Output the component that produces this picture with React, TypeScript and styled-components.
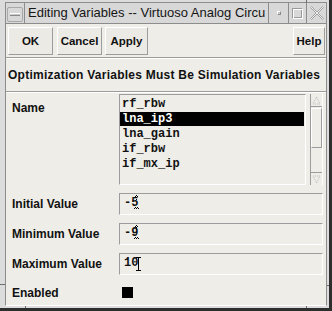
import React from 'react';
import styled, { createGlobalStyle } from 'styled-components';

const Global = createGlobalStyle`
  html, body { margin: 0; padding: 0; background: #dcdcdc; }
  body { font-family: "Liberation Sans", Arial, sans-serif; }
`;

const Frame = styled.div`
  position: relative;
  box-sizing: border-box;
  width: 332px;
  height: 311px;
  background: #dcdcdc;
  padding: 2px 2px 2px 5px;
  border-right: 3px solid #2e2e2e;
  border-bottom: 3px solid #2e2e2e;
  display: flex;
`;

const Notch = styled.div<{ $x?: number; $y?: number; $w: number; $h: number }>`
  position: absolute;
  background: #6e6e6e;
  width: ${(p) => p.$w}px;
  height: ${(p) => p.$h}px;
  ${(p) => (p.$x !== undefined ? `left: ${p.$x}px;` : '')}
  ${(p) => (p.$y !== undefined ? `top: ${p.$y}px;` : '')}
`;

const Window = styled.div`
  box-sizing: border-box;
  width: 322px;
  height: 304px;
  border: 1px solid #8c8c8c;
  border-bottom-color: #ffffff;
  display: flex;
  flex-direction: column;
`;

const TitleBar = styled.div`
  display: flex;
  height: 21px;
  box-sizing: border-box;
  background: #d8d8d8;
  border-bottom: 1px solid #8c8c8c;
`;

const TitleCell = styled.div<{ $w?: number }>`
  box-sizing: border-box;
  ${(p) => (p.$w ? `width: ${p.$w}px; flex: none;` : 'flex: 1; min-width: 0;')}
  border-right: 1px solid #8c8c8c;
  display: flex;
  align-items: center;
  justify-content: center;
  &:last-child { border-right: none; }
`;

const TitleText = styled.div`
  flex: 1;
  padding-left: 3px;
  font-size: 13px;
  line-height: 20px;
  color: #151515;
  white-space: nowrap;
  overflow: hidden;
`;

const MenuBox = styled.div`
  box-sizing: border-box;
  width: 16px;
  height: 15px;
  margin-top: 3px;
  border: 1px solid #a8a8a8;
  border-radius: 2px;
  display: flex;
  align-items: center;
  justify-content: center;
`;

const MenuDash = styled.div`
  width: 10px;
  height: 1px;
  border-top: 1px solid #ffffff;
  border-bottom: 1px solid #8a8a8a;
  background: #c8c8c8;
`;

const MinIcon = styled.div`
  width: 2px;
  height: 2px;
  border: 1px solid #8a8a8a;
  border-top-color: #ffffff;
  border-left-color: #ffffff;
  background: #c8c8c8;
`;

const MaxIcon = styled.div`
  box-sizing: border-box;
  width: 11px;
  height: 11px;
  border: 1px solid #9a9a9a;
  border-bottom-color: #ffffff;
  border-right-color: #ffffff;
  box-shadow: inset 1px 1px 0 #ffffff, inset -1px -1px 0 #9a9a9a;
`;

const Body = styled.div`
  flex: 1;
  background: #eeede8;
  display: flex;
  flex-direction: column;
`;

const ButtonRow = styled.div`
  display: flex;
  align-items: flex-start;
  height: 33px;
  box-sizing: border-box;
  padding: 3px 1px 0 2px;
`;

const Spacer = styled.div`
  flex: 1;
`;

const Button = styled.div<{ $w: number; $gap?: number }>`
  box-sizing: border-box;
  width: ${(p) => p.$w}px;
  height: 28px;
  margin-right: ${(p) => p.$gap ?? 0}px;
  border: 1px solid #9c9c9c;
  border-top-color: #ffffff;
  border-left-color: #ffffff;
  background: #eceae4;
  display: flex;
  align-items: center;
  justify-content: center;
  font-weight: bold;
  font-size: 11.5px;
  color: #111;
`;

const Separator = styled.div`
  height: 1px;
  background: #9c9c9c;
  border-bottom: 1px solid #ffffff;
`;

const Heading = styled.div`
  height: 32px;
  line-height: 32px;
  padding-left: 2px;
  font-weight: bold;
  font-size: 12px;
  letter-spacing: 0.25px;
  color: #111;
  white-space: nowrap;
`;

const Form = styled.div`
  display: grid;
  grid-template-columns: 107px 204px;
  row-gap: 8px;
  padding: 1px 3px 0 6px;
`;

const Label = styled.div<{ $top?: boolean }>`
  font-weight: bold;
  font-size: 12px;
  line-height: 14px;
  color: #111;
  align-self: ${(p) => (p.$top ? 'start' : 'center')};
  padding-top: ${(p) => (p.$top ? 7 : 0)}px;
`;

const ListArea = styled.div`
  display: flex;
  gap: 4px;
  height: 91px;
`;

const ListBox = styled.div`
  box-sizing: border-box;
  width: 187px;
  border: 1px solid #9c9c9c;
  border-bottom-color: #ffffff;
  border-right-color: #ffffff;
  padding: 2px 1px 0 0;
  display: flex;
  flex-direction: column;
  gap: 1px;
`;

const ListItem = styled.div<{ $sel?: boolean }>`
  height: 14px;
  line-height: 14px;
  padding-left: 2px;
  font-family: "Liberation Mono", "Courier New", monospace;
  font-weight: bold;
  font-size: 12px;
  background: ${(p) => (p.$sel ? '#000' : 'transparent')};
  color: ${(p) => (p.$sel ? '#fff' : '#111')};
`;

const Scrollbar = styled.div`
  box-sizing: border-box;
  width: 13px;
  border-left: 1px solid #9c9c9c;
  border-right: 1px solid #ffffff;
  display: flex;
  flex-direction: column;
`;

const ArrowCell = styled.div<{ $bottom?: boolean }>`
  height: 12px;
  flex: none;
  display: flex;
  align-items: center;
  justify-content: center;
  ${(p) => (p.$bottom ? 'border-top: 1px solid #9c9c9c; margin-top: auto;' : 'border-bottom: 1px solid #9c9c9c;')}
`;

const Thumb = styled.div`
  box-sizing: border-box;
  height: 40px;
  margin: 1px 0 0 0;
  border: 1px solid #9c9c9c;
  border-top-color: #ffffff;
  border-left-color: #ffffff;
`;

const Field = styled.div`
  box-sizing: border-box;
  height: 22px;
  border: 1px solid #9c9c9c;
  border-bottom-color: #ffffff;
  border-right-color: #ffffff;
  padding: 2px 0 0 4px;
  display: flex;
  align-items: flex-start;
  font-family: "Liberation Mono", "Courier New", monospace;
  font-weight: bold;
  font-size: 12px;
  line-height: 14px;
  color: #111;
`;

const CaretSvg = styled.svg<{ $shift: number; $top: number }>`
  display: block;
  flex: none;
  margin-left: ${(p) => p.$shift}px;
  margin-top: ${(p) => p.$top}px;
`;

const Check = styled.div`
  width: 11px;
  height: 11px;
  margin-left: 3px;
  background: #000;
`;

const EnabledCell = styled.div`
  height: 19px;
  display: flex;
  align-items: center;
`;

const Caret = ({ dotted }: { dotted?: boolean }) =>
  dotted ? (
    <CaretSvg width="6" height="15" viewBox="0 0 6 15" $shift={-4} $top={-1}>
      <g fill="#000">
        <rect x="2" y="0" width="1" height="1" />
        <rect x="1" y="1" width="1" height="1" />
        <rect x="3" y="1" width="1" height="1" />
        <rect x="2" y="2" width="1" height="1" />
        <rect x="2" y="4" width="1" height="1" />
        <rect x="1" y="12" width="1" height="1" />
        <rect x="3" y="12" width="1" height="1" />
        <rect x="0" y="13" width="1" height="1" />
        <rect x="2" y="13" width="1" height="1" />
        <rect x="4" y="13" width="1" height="1" />
      </g>
    </CaretSvg>
  ) : (
    <CaretSvg width="6" height="14" viewBox="0 0 6 14" $shift={-2} $top={1}>
      <path d="M0 0.5H5M2.5 0.5V13.5M0 13.5H5" stroke="#000" strokeWidth="1" fill="none" />
    </CaretSvg>
  );

const items = ['rf_rbw', 'lna_ip3', 'lna_gain', 'if_rbw', 'if_mx_ip'];

export default function App() {
  return (
    <>
      <Global />
      <Frame>
        <Notch $x={306} $y={0} $w={1} $h={3} />
        <Notch $x={306} $y={306} $w={1} $h={2} />
        <Notch $x={25} $y={306} $w={1} $h={2} />
        <Notch $x={0} $y={284} $w={5} $h={1} />
        <Notch $x={327} $y={285} $w={2} $h={1} />
        <Window>
          <TitleBar>
            <TitleCell $w={19}>
              <MenuBox>
                <MenuDash />
              </MenuBox>
            </TitleCell>
            <TitleCell>
              <TitleText>Editing Variables -- Virtuoso Analog Circu</TitleText>
            </TitleCell>
            <TitleCell $w={20}>
              <MinIcon />
            </TitleCell>
            <TitleCell $w={18}>
              <MaxIcon />
            </TitleCell>
            <TitleCell $w={19}>
              <svg width="14" height="14" viewBox="0 0 14 14">
                <path
                  d="M0.5 1.5L1.5 0.5L7 6L12.5 0.5L13.5 1.5L8 7L13.5 12.5L12.5 13.5L7 8L1.5 13.5L0.5 12.5L6 7Z"
                  fill="#ececec"
                  stroke="#a4a4a4"
                  strokeWidth="1"
                />
              </svg>
            </TitleCell>
          </TitleBar>
          <Body>
            <ButtonRow>
              <Button $w={45} $gap={4}>OK</Button>
              <Button $w={45} $gap={3}>Cancel</Button>
              <Button $w={43}>Apply</Button>
              <Spacer />
              <Button $w={32}>Help</Button>
            </ButtonRow>
            <Separator />
            <Heading>Optimization Variables Must Be Simulation Variables</Heading>
            <Separator />
            <Form>
              <Label $top>Name</Label>
              <ListArea>
                <ListBox>
                  {items.map((it) => (
                    <ListItem key={it} $sel={it === 'lna_ip3'}>
                      {it}
                    </ListItem>
                  ))}
                </ListBox>
                <Scrollbar>
                  <ArrowCell>
                    <svg width="9" height="9" viewBox="0 0 9 9">
                      <path d="M4.5 1L8 8H1Z" fill="none" stroke="#b8b8b8" strokeDasharray="1 1" />
                    </svg>
                  </ArrowCell>
                  <Thumb />
                  <ArrowCell $bottom>
                    <svg width="9" height="9" viewBox="0 0 9 9">
                      <path d="M4.5 8L8 1H1Z" fill="none" stroke="#b8b8b8" strokeDasharray="1 1" />
                    </svg>
                  </ArrowCell>
                </Scrollbar>
              </ListArea>
              <Label>Initial Value</Label>
              <Field>
                -5
                <Caret dotted />
              </Field>
              <Label>Minimum Value</Label>
              <Field>
                -9
                <Caret dotted />
              </Field>
              <Label>Maximum Value</Label>
              <Field>
                10
                <Caret />
              </Field>
              <Label>Enabled</Label>
              <EnabledCell>
                <Check />
              </EnabledCell>
            </Form>
          </Body>
        </Window>
      </Frame>
    </>
  );
}
